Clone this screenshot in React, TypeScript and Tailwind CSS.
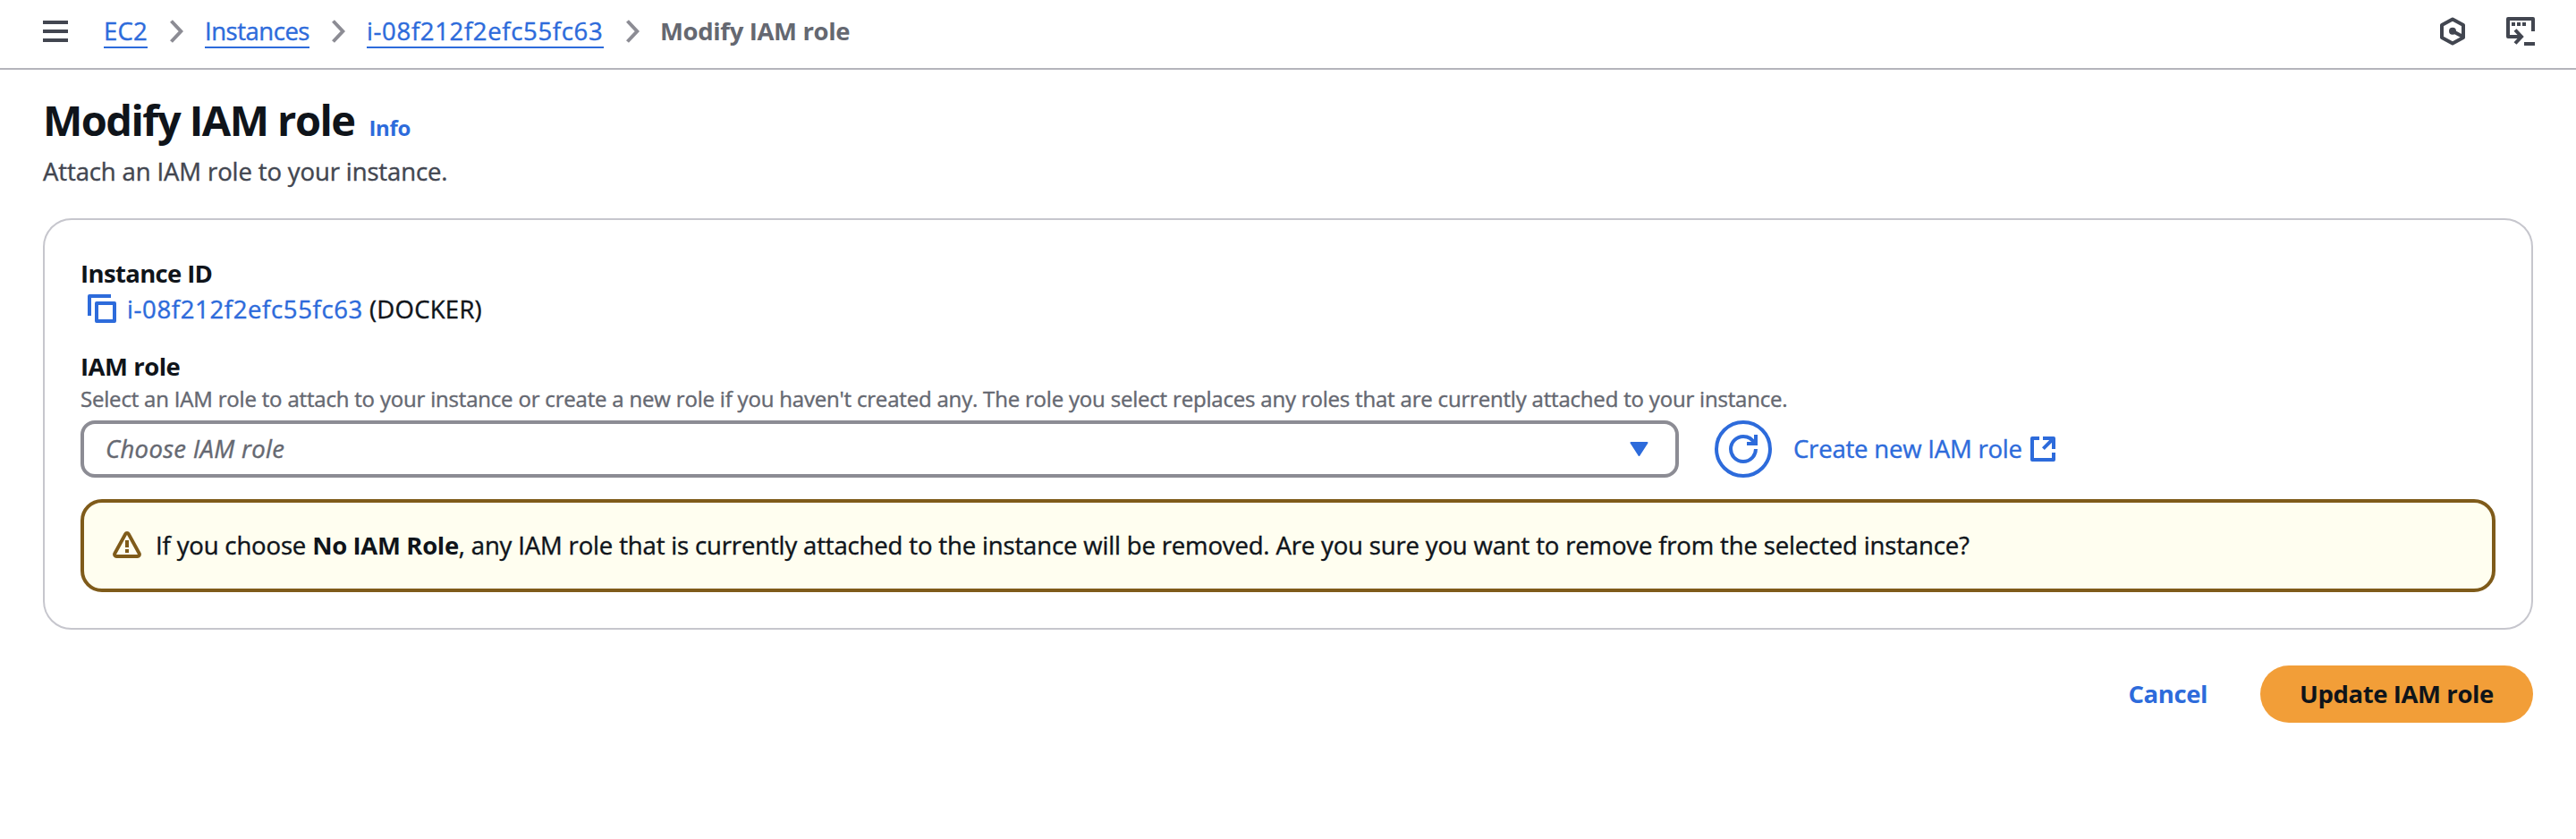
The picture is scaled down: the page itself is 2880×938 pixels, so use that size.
import React from "react";

function MenuIcon() {
  return (
    <svg className="h-6 w-7 shrink-0 text-[#424650]" viewBox="0 0 28 24" fill="currentColor">
      <rect width="28" height="4" />
      <rect y="10" width="28" height="4" />
      <rect y="20" width="28" height="4" />
    </svg>
  );
}

function ChevronIcon() {
  return (
    <svg className="h-[26px] w-[15px] shrink-0 text-[#8c8c94]" viewBox="0 0 15 26" fill="none" stroke="currentColor" strokeWidth="4">
      <path d="M1.5 1.5 12.3 13 1.5 24.5" />
    </svg>
  );
}

function HexagonIcon() {
  return (
    <svg className="size-8" viewBox="0 0 32 32" fill="none" stroke="currentColor" strokeWidth="4" strokeLinejoin="round">
      <path d="M16 2.4 28 9v14l-12 6.6L4 23V9z" />
      <path d="m16 15.7 11 6" />
      <circle cx="16" cy="15.7" r="4" fill="currentColor" stroke="none" />
    </svg>
  );
}

function CloudShellIcon() {
  return (
    <svg className="size-8" viewBox="0 0 32 32" fill="none" stroke="currentColor" strokeWidth="4" strokeLinejoin="round">
      <path d="M30 16V2H2v20h15" />
      <path d="m10 14.5 7 7.5-7 7.5" strokeLinejoin="miter" />
      <path d="M20 30h12M6 8h4M12 8h4M18 8h4" />
    </svg>
  );
}

function CopyIcon() {
  return (
    <svg className="size-8 shrink-0 text-[#2d6bdb]" viewBox="0 0 32 32" fill="none" stroke="currentColor" strokeWidth="4" strokeLinejoin="round">
      <path d="M26 2H2v22" />
      <path d="M10 10h20v20H10z" />
    </svg>
  );
}

function RefreshIcon() {
  return (
    <svg className="size-8" viewBox="0 0 16 16" fill="none" stroke="currentColor" strokeWidth="2">
      <path d="M15 8c0 3.87-3.13 7-7 7s-7-3.13-7-7 3.13-7 7-7c2.79 0 5.2 1.63 6.33 4" />
      <path d="M10 5h5V0" />
    </svg>
  );
}

function ExternalIcon() {
  return (
    <svg className="size-8" viewBox="0 0 16 16" fill="none" stroke="currentColor" strokeWidth="2" strokeLinejoin="round">
      <path d="M14 10v4H2V2h4" />
      <path d="M8 2h6v6M14 2 8.2 7.8" />
    </svg>
  );
}

function WarningIcon() {
  return (
    <svg className="size-8 shrink-0 text-[#7f5b1a]" viewBox="0 0 32 32" fill="none" stroke="currentColor" strokeWidth="4">
      <path d="M14.2 5.1 2.4 26.6A2.3 2.3 0 0 0 4.4 30h23.2a2.3 2.3 0 0 0 2-3.4L17.8 5.1a2.05 2.05 0 0 0-3.6 0z" />
      <path d="M16 12v8M16 22v4" />
    </svg>
  );
}

function Crumb({ label, className }: { label: string; className: string }) {
  return (
    <a className={`h-10 self-start border-b-2 border-[#2d6bdb] leading-[41px] whitespace-nowrap text-[#2d6bdb] ${className}`}>
      {label}
    </a>
  );
}

export default function App() {
  return (
    <div className="min-h-[938px] w-[2880px] bg-white font-['Open_Sans','Noto_Sans',sans-serif] text-[27.5px] leading-10 text-[#0f141a] [-webkit-text-stroke-width:0.4px]">
      <header className="flex h-[78px] items-start justify-between border-b-2 border-[#b4b4bb] pt-[14px] pr-[46px] pl-12">
        <nav className="flex h-[42px] items-center">
          <MenuIcon />
          <div className="ml-10 flex h-[42px] items-center gap-[25px]">
            <Crumb label="EC2" className="w-[49px] tracking-[0.15px]" />
            <ChevronIcon />
            <Crumb label="Instances" className="-ml-px w-[117px] tracking-[-0.48px]" />
            <ChevronIcon />
            <Crumb label="i-08f212f2efc55fc63" className="-ml-px w-[265px] tracking-[0.66px]" />
            <ChevronIcon />
            <span className="-ml-[2px] self-start leading-[41px] font-bold tracking-[-0.35px] whitespace-nowrap text-[#656871] [-webkit-text-stroke-width:0px]">
              Modify IAM role
            </span>
          </div>
        </nav>
        <div className="flex h-[42px] items-center gap-11 text-[#424650]">
          <HexagonIcon />
          <CloudShellIcon />
        </div>
      </header>

      <main className="px-12 pt-[26px]">
        <div className="flex items-baseline [-webkit-text-stroke-width:0px]">
          <h1 className="text-[47px] leading-[60px] font-bold tracking-[-1.55px]">Modify IAM role</h1>
          <a className="ml-[16px] text-[24px] leading-9 font-bold tracking-[-0.3px] text-[#2d6bdb]">Info</a>
        </div>
        <p className="mt-[7px] h-10 leading-[42px] tracking-[-0.12px] text-[#424650]">Attach an IAM role to your instance.</p>

        <section className="mt-[33px] h-[460px] rounded-[32px] border-2 border-[#c6c6cd] px-10 pt-[39px]">
          <h2 className="h-10 leading-[41px] font-bold tracking-[-0.65px] [-webkit-text-stroke-width:0px]">Instance ID</h2>
          <div className="flex h-10 items-center pl-2 leading-[41px]">
            <CopyIcon />
            <a className="ml-3 tracking-[0.64px] text-[#2d6bdb]">i-08f212f2efc55fc63</a>
            <span className="ml-[7px] tracking-[0.25px]">(DOCKER)</span>
          </div>

          <h2 className="mt-6 h-10 leading-[41px] font-bold tracking-[-0.5px] [-webkit-text-stroke-width:0px]">IAM role</h2>
          <p className="-mt-px h-9 text-[24px] leading-9 tracking-[-0.195px] whitespace-nowrap text-[#656871]">
            Select an IAM role to attach to your instance or create a new role if you haven't created any. The role you
            select replaces any roles that are currently attached to your instance.
          </p>
          <div className="mt-[6px] flex items-center">
            <div className="flex h-16 w-[1787px] items-center justify-between rounded-2xl border-4 border-[#8c8c94] pr-[30px] pl-[24px]">
              <span className="tracking-[0.3px] text-[#656871] italic">Choose IAM role</span>
              <svg className="h-4 w-[21px] text-[#2d6bdb]" viewBox="0 0 21 16" fill="currentColor" stroke="currentColor" strokeWidth="2" strokeLinejoin="round">
                <path d="M1.5 1h18l-9 14z" />
              </svg>
            </div>
            <button className="ml-10 flex size-16 items-center justify-center rounded-full border-4 border-[#2d6bdb] text-[#2d6bdb]">
              <RefreshIcon />
            </button>
            <a className="ml-6 flex items-center text-[#2d6bdb]">
              <span className="w-[263px] tracking-[-0.2px] whitespace-nowrap">Create new IAM role</span>
              <ExternalIcon />
            </a>
          </div>

          <div className="mt-6 flex h-[104px] items-center rounded-3xl border-4 border-[#7f5b1a] bg-[#fffef0] pl-8">
            <div className="pb-1">
              <WarningIcon />
            </div>
            <p className="ml-4 tracking-[-0.15px] whitespace-nowrap">
              If you choose{" "}
              <b className="font-bold tracking-[-0.35px] [-webkit-text-stroke-width:0px]">No IAM Role</b>, any IAM role
              that is currently attached to the instance will be removed. Are you sure you want to remove from the
              selected instance?
            </p>
          </div>
        </section>

        <div className="mt-10 flex h-16 items-center justify-end font-bold tracking-[-0.4px] [-webkit-text-stroke-width:0px]">
          <button className="mr-[59px] text-[#2d6bdb]">Cancel</button>
          <button className="h-16 w-[305px] rounded-full bg-[#f29e38]">Update IAM role</button>
        </div>
      </main>
    </div>
  );
}
